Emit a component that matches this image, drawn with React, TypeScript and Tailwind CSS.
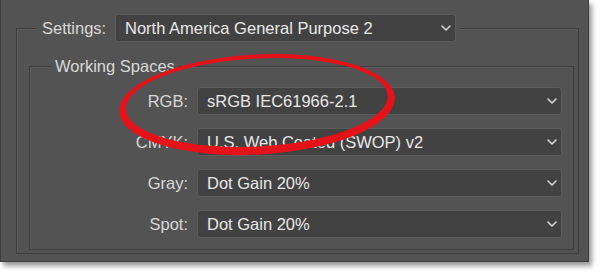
import React from "react";

const rows = [
  { label: "RGB:", value: "sRGB IEC61966-2.1" },
  { label: "CMYK:", value: "U.S. Web Coated (SWOP) v2" },
  { label: "Gray:", value: "Dot Gain 20%" },
  { label: "Spot:", value: "Dot Gain 20%" },
];

const Chevron = () => (
  <svg width="10" height="6" viewBox="0 0 10 6" className="shrink-0">
    <path d="M1 1l4 4 4-4" fill="none" stroke="#d6d6d6" strokeWidth="1.6" strokeLinecap="round" strokeLinejoin="round" />
  </svg>
);

const Select = ({ value, className }: { value: string; className: string }) => (
  <div
    className={`h-[28px] rounded-[3px] bg-[#424242] border border-[#5c5c5c] flex items-center justify-between pl-[9px] pr-[4px] text-[#e8e8e8] ${className}`}
  >
    <span>{value}</span>
    <Chevron />
  </div>
);

export default function App() {
  return (
    <div className="relative w-[600px] h-[274px] bg-white overflow-hidden font-['Liberation_Sans',Arial,sans-serif] text-[16.5px] leading-[18px]">
      <div className="w-[589px] h-[262px] bg-[#535353] border-l border-r border-b border-[#3d3d3d] shadow-[3px_4px_5px_rgba(0,0,0,0.4)] pt-[14px] pl-[15px]">
        {/* colour settings group */}
        <fieldset className="w-[563px] h-[240px] border border-[#3e3e3e] shadow-[inset_1px_1px_0_#5d5d5d]">
          <legend className="ml-[19px] pl-[6px] pr-[4px] bg-[#535353]">
            <div className="flex items-center">
              <span className="w-[73px] text-[#d8d8d8]">Settings:</span>
              <Select value="North America General Purpose 2" className="w-[341px] pr-[3px]" />
            </div>
          </legend>

          <fieldset className="ml-[12px] mr-[4px] mt-[15px] h-[193px] border border-[#3e3e3e] shadow-[inset_1px_1px_0_#5d5d5d]">
            <legend className="ml-[21px] px-[4px] bg-[#535353] text-[#d8d8d8]">Working Spaces</legend>
            <div className="flex flex-col gap-[13px] pt-[12px]">
              {rows.map((row) => (
                <div key={row.label} className="flex items-center">
                  <span className="w-[158px] text-right text-[#d8d8d8]">{row.label}</span>
                  <Select value={row.value} className="ml-[9px] w-[365px]" />
                </div>
              ))}
            </div>
          </fieldset>
        </fieldset>
      </div>

      {/* hand-drawn highlight */}
      <svg className="absolute inset-0 pointer-events-none" width="600" height="274" viewBox="0 0 600 274">
        <g transform="rotate(-3 257 104)">
          <path
            fillRule="evenodd"
            fill="#e5121a"
            d="M119 104.5a138 50 0 1 0 276 0a138 50 0 1 0 -276 0Z M126 102.5a131 44 0 1 0 262 0a131 44 0 1 0 -262 0Z"
          />
        </g>
      </svg>
    </div>
  );
}
